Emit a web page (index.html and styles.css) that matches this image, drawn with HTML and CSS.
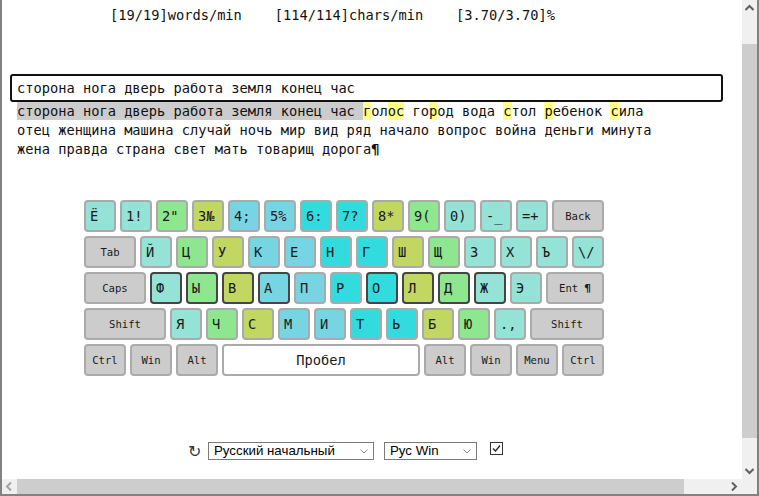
FILE: index.html
```html
<!DOCTYPE html>
<html lang="ru">
<head>
<meta charset="utf-8">
<title>Клавиатурный тренажёр</title>
<link rel="stylesheet" href="styles.css">
</head>
<body>
<div class="frame">
  <main class="page">
    <div class="stats">[19/19]words/min    [114/114]chars/min    [3.70/3.70]%</div>
    <div class="typed">сторона нога дверь работа земля конец час</div>
    <div class="lesson">
      <div class="line"><span class="done">сторона нога дверь работа земля конец час </span><span class="hl">г</span>ол<span class="hl">ос</span> го<span class="hl">р</span>од вода <span class="hl">с</span>тол <span class="hl">р</span>ебенок <span class="hl">с</span>ила</div>
      <div class="line">отец женщина машина случай ночь мир вид ряд начало вопрос война деньги минута</div>
      <div class="line">жена правда страна свет мать товарищ дорога<b class="pil">¶</b></div>
    </div>

    <div class="keyboard">
      <div class="row">
        <div class="key t">Ё</div><div class="key t">1!</div><div class="key g">2"</div><div class="key o">3№</div><div class="key b">4;</div><div class="key b">5%</div><div class="key c">6:</div><div class="key c">7?</div><div class="key o">8*</div><div class="key g">9(</div><div class="key t">0)</div><div class="key t">-_</div><div class="key t">=+</div><div class="key mod w52">Back</div>
      </div>
      <div class="row">
        <div class="key mod w52">Tab</div><div class="key t">Й</div><div class="key g">Ц</div><div class="key o">У</div><div class="key b">К</div><div class="key b">Е</div><div class="key c">Н</div><div class="key c">Г</div><div class="key o">Ш</div><div class="key g">Щ</div><div class="key t">З</div><div class="key t">Х</div><div class="key t">Ъ</div><div class="key t">\/</div>
      </div>
      <div class="row">
        <div class="key mod w62">Caps</div><div class="key t home">Ф</div><div class="key g home">Ы</div><div class="key o home">В</div><div class="key b home">А</div><div class="key b">П</div><div class="key c">Р</div><div class="key c home">О</div><div class="key o home">Л</div><div class="key g home">Д</div><div class="key t home">Ж</div><div class="key t">Э</div><div class="key mod w58">Ent <b>¶</b></div>
      </div>
      <div class="row">
        <div class="key mod w82">Shift</div><div class="key t">Я</div><div class="key g">Ч</div><div class="key o">С</div><div class="key b">М</div><div class="key b">И</div><div class="key c">Т</div><div class="key c">Ь</div><div class="key o">Б</div><div class="key g">Ю</div><div class="key t">.,</div><div class="key mod w74">Shift</div>
      </div>
      <div class="row">
        <div class="key mod w42">Ctrl</div><div class="key mod w42">Win</div><div class="key mod w42">Alt</div><div class="key space">Пробел</div><div class="key mod w42">Alt</div><div class="key mod w42">Win</div><div class="key mod w42">Menu</div><div class="key mod w42">Ctrl</div>
      </div>
    </div>

    <div class="controls">
      <span class="reload">↻</span>
      <span class="select sel-lesson"><span class="sel-text">Русский начальный</span><svg class="chev" width="8" height="5" viewBox="0 0 8 5"><polyline points="0.5,0.5 4,4 7.5,0.5" fill="none" stroke="#8a8a8a" stroke-width="1"/></svg></span>
      <span class="select sel-layout"><span class="sel-text">Рус Win</span><svg class="chev" width="8" height="5" viewBox="0 0 8 5"><polyline points="0.5,0.5 4,4 7.5,0.5" fill="none" stroke="#8a8a8a" stroke-width="1"/></svg></span>
      <span class="check"><svg width="11" height="11" viewBox="0 0 11 11"><polyline points="2,5.5 4.5,8 9,2.5" fill="none" stroke="#222" stroke-width="1.3"/></svg></span>
    </div>
  </main>

  <div class="vscroll">
    <div class="vbtn"><svg width="15" height="17" viewBox="0 0 15 17"><polyline points="3.5,10 7.5,6 11.5,10" fill="none" stroke="#606060" stroke-width="2"/></svg></div>
    <div class="vgap-top"></div>
    <div class="vthumb"></div>
    <div class="vfill"></div>
    <div class="vbtn"><svg width="15" height="17" viewBox="0 0 15 17"><polyline points="3.5,7 7.5,11 11.5,7" fill="none" stroke="#606060" stroke-width="2"/></svg></div>
  </div>
  <div class="hscroll">
    <div class="hbtn"><svg width="15" height="15" viewBox="0 0 15 15"><polyline points="9,3.5 5,7.5 9,11.5" fill="none" stroke="#a3a3a3" stroke-width="2"/></svg></div>
    <div class="hthumb"></div>
    <div class="hfill"></div>
    <div class="hbtn hbtn-right"><svg width="17" height="15" viewBox="0 0 17 15"><polyline points="7,3.5 11,7.5 7,11.5" fill="none" stroke="#606060" stroke-width="2"/></svg></div>
  </div>
  <div class="corner"></div>
</div>
</body>
</html>
```

FILE: styles.css
```css
html, body {
  margin: 0;
  padding: 0;
  background: #ffffff;
}

.frame {
  width: 759px;
  height: 496px;
  box-sizing: border-box;
  border: 2px solid #828282;
  border-top: 0;
  display: grid;
  grid-template-columns: 740px 15px;
  grid-template-rows: 479px 15px;
  background: #ffffff;
}

.page {
  overflow: hidden;
  font-family: "DejaVu Sans Mono", "Liberation Mono", monospace;
  font-size: 13.7px;
  color: #111111;
}

.stats {
  white-space: pre;
  line-height: 19px;
  padding: 6px 0 0 108px;
}

.typed {
  margin: 49px 0 0 8px;
  width: 713px;
  height: 28px;
  box-sizing: border-box;
  border: 2px solid #111111;
  border-radius: 3px;
  padding-left: 5px;
  line-height: 24px;
  white-space: pre;
}

.lesson {
  padding-left: 15px;
  line-height: 19px;
}

.line {
  white-space: pre;
}

.done {
  background: #cccccc;
  padding: 1px 0;
}

.hl {
  background: #ffff88;
  padding: 1px 0;
}

.pil {
  font-weight: bold;
}

/* keyboard */
.keyboard {
  margin: 41px 0 0 82px;
  width: 520px;
  display: flex;
  flex-direction: column;
  gap: 4px;
}

.row {
  display: flex;
  gap: 4px;
}

.key {
  box-sizing: border-box;
  width: 32px;
  height: 32px;
  border: 2px solid #aaaaaa;
  border-radius: 4px;
  padding-left: 4px;
  line-height: 28px;
  white-space: pre;
  color: #1a1a1a;
}

.key.home {
  border-color: #454545;
}

.t { background: #95e2d6; }
.g { background: #8ee68e; }
.o { background: #c2d662; }
.b { background: #77d4e2; }
.c { background: #32dcde; }

.key.mod {
  background: #cccccc;
  padding-left: 0;
  text-align: center;
  font-size: 10.6px;
}

.key.space {
  width: 198px;
  background: #ffffff;
  padding-left: 0;
  text-align: center;
}

.w42 { width: 42px; }
.w52 { width: 52px; }
.w58 { width: 58px; }
.w62 { width: 62px; }
.w74 { width: 74px; }
.w82 { width: 82px; }

/* controls */
.controls {
  margin: 66px 0 0 186px;
  display: flex;
  align-items: flex-start;
  font-family: "Liberation Sans", Arial, sans-serif;
  font-size: 13.3px;
  color: #000000;
}

.reload {
  font-family: "DejaVu Sans", sans-serif;
  font-size: 16px;
  line-height: 19px;
  width: 12px;
  margin-right: 8px;
  color: #333333;
}

.select {
  box-sizing: border-box;
  height: 18px;
  border: 1px solid #7a7a7a;
  background: #ffffff;
  display: flex;
  align-items: center;
  justify-content: space-between;
  padding: 0 5px 0 5px;
  line-height: 16px;
}

.sel-lesson {
  width: 166px;
  margin-right: 10px;
}

.sel-layout {
  width: 93px;
  margin-right: 13px;
}

.chev {
  display: block;
}

.check {
  box-sizing: border-box;
  width: 13px;
  height: 13px;
  border: 1px solid #333333;
  background: #ffffff;
  display: flex;
  align-items: center;
  justify-content: center;
}

.check svg {
  display: block;
}

/* scrollbars */
.vscroll {
  background: #f0f0f0;
  display: flex;
  flex-direction: column;
}

.vbtn {
  height: 17px;
}

.vbtn svg, .hbtn svg {
  display: block;
}

.vgap-top {
  height: 27px;
}

.vthumb {
  height: 394px;
  background: #cdcdcd;
}

.vfill {
  flex: 1;
}

.hscroll {
  background: #f0f0f0;
  display: flex;
}

.hbtn {
  width: 15px;
}

.hbtn-right {
  width: 17px;
}

.hthumb {
  width: 667px;
  background: #cdcdcd;
}

.hfill {
  flex: 1;
}

.corner {
  background: #f0f0f0;
}
```
